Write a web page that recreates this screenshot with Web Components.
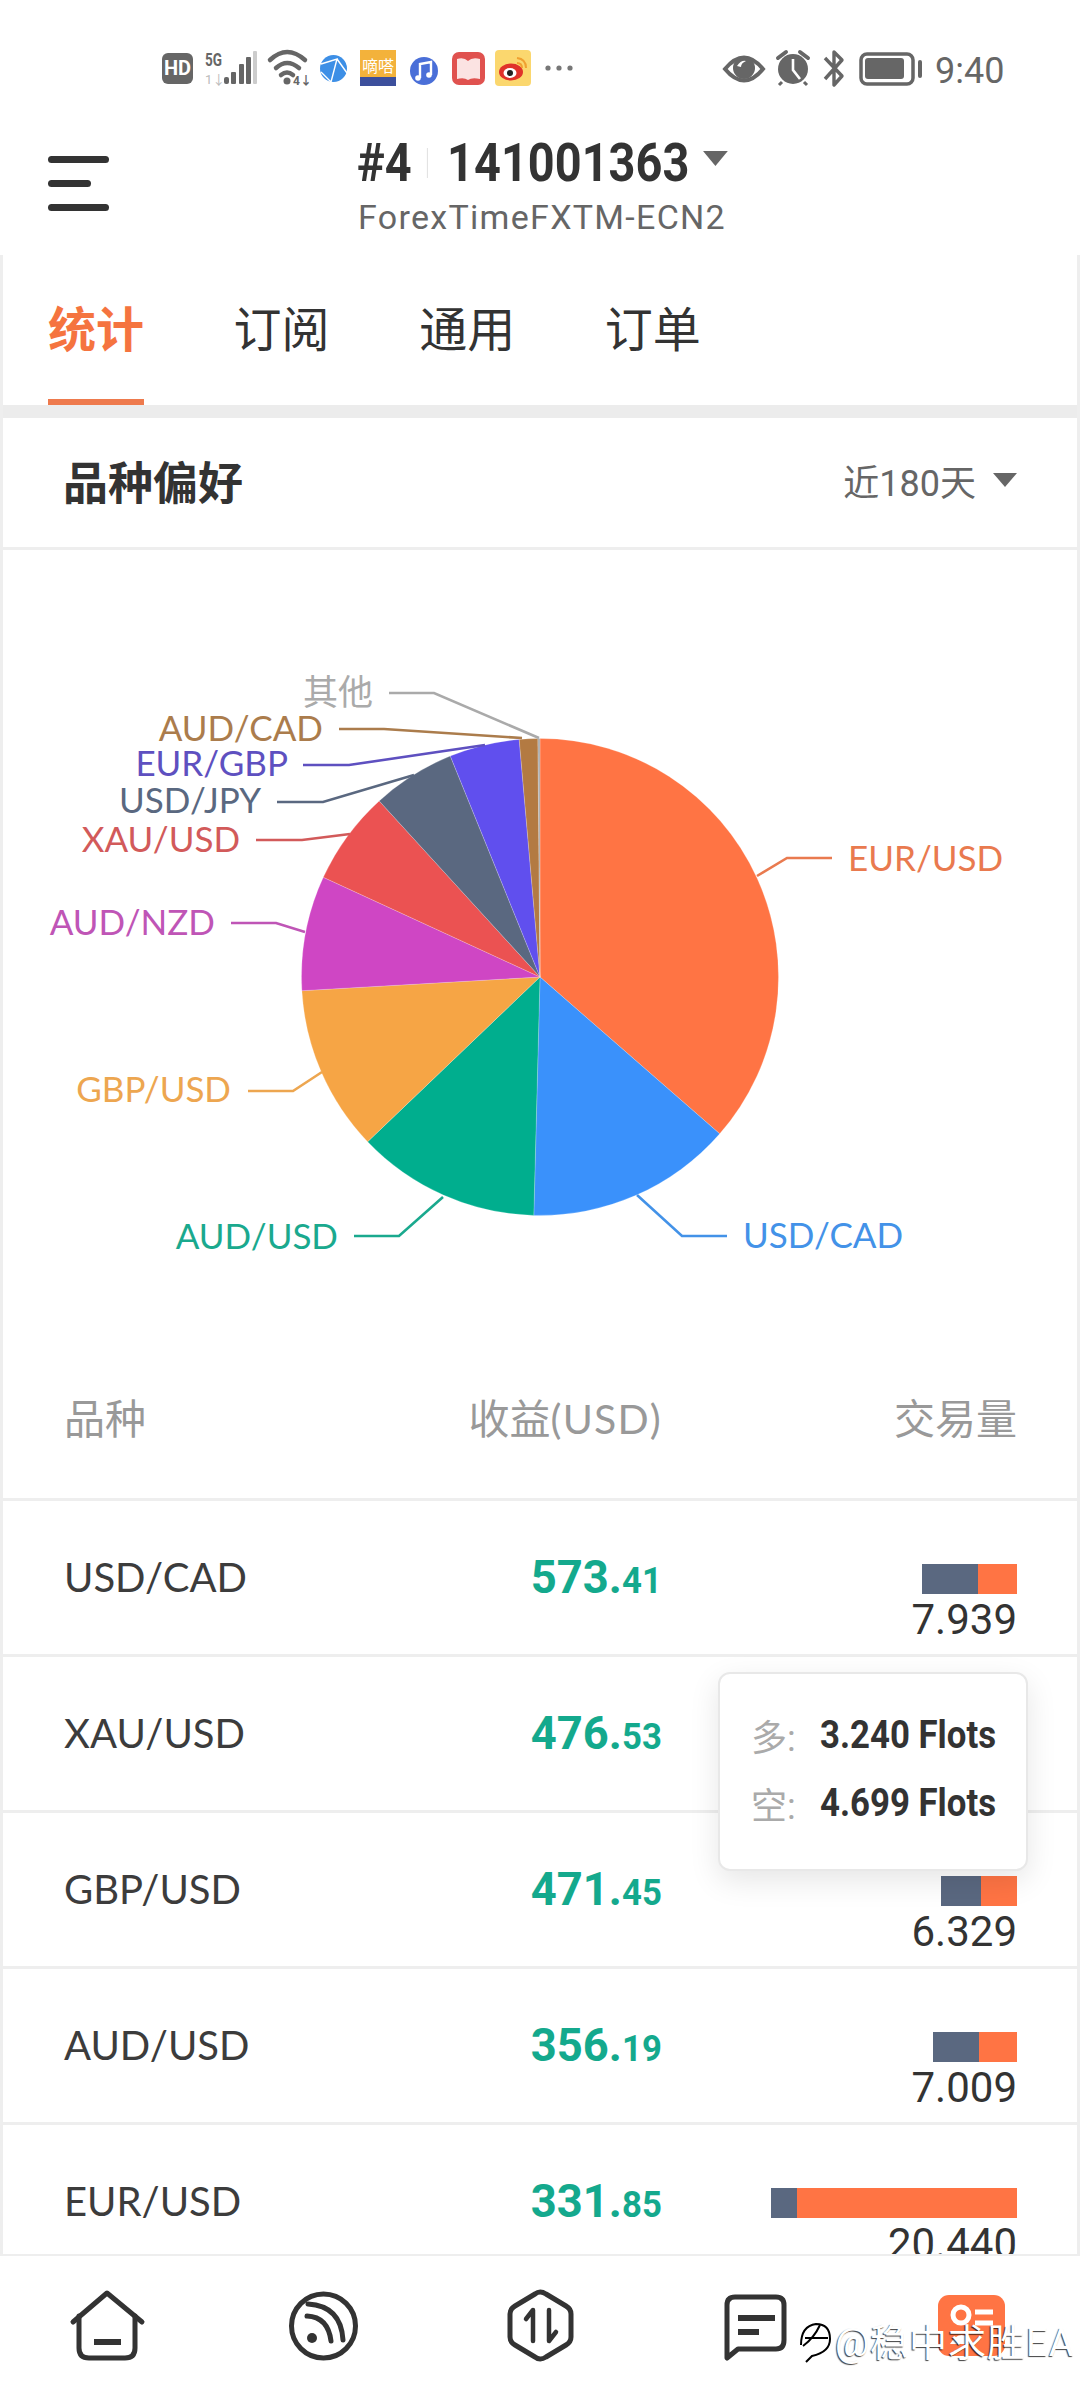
<!DOCTYPE html>
<html lang="zh">
<head>
<meta charset="utf-8">
<title>品种偏好</title>
<style>
  html, body { margin: 0; background: #fff; }
  body { width: 1080px; height: 2400px; overflow: hidden; display: flex; flex-direction: column; font-family: Roboto, "Noto Sans CJK SC", sans-serif; }
  .content { flex: 1; min-height: 0; overflow: hidden; position: relative; border: solid #eeeeee; border-width: 0 3px; }
</style>
</head>
<body>
<status-bar></status-bar>
<app-header></app-header>
<div class="content">
  <tab-bar></tab-bar>
  <section-title></section-title>
  <pie-chart></pie-chart>
  <symbol-head></symbol-head>
  <symbol-row name="USD/CAD" big="573." small="41" start="922" split="978" volume="7.939"></symbol-row>
  <symbol-row name="XAU/USD" big="476." small="53"></symbol-row>
  <symbol-row name="GBP/USD" big="471." small="45" start="941" split="981" volume="6.329"></symbol-row>
  <symbol-row name="AUD/USD" big="356." small="19" start="933" split="979" volume="7.009"></symbol-row>
  <symbol-row name="EUR/USD" big="331." small="85" start="771" split="797" volume="20.440"></symbol-row>
  <vol-tooltip></vol-tooltip>
</div>
<bottom-nav></bottom-nav>
<water-mark></water-mark>

<script>
const CJK = `Roboto, "Noto Sans CJK SC", sans-serif`

class StatusBar extends HTMLElement {
  constructor() {
    super()
    this.attachShadow({ mode: 'open' }).innerHTML = `
      <style>
        :host { display: block; height: 110px; }
        svg { display: block; }
        text { font-family: ${CJK}; }
      </style>
      <svg width="1080" height="110" viewBox="0 0 1080 110">
        <rect x="162" y="53" width="31" height="31" rx="6" fill="#666"/>
        <text x="177.5" y="75" font-size="20" font-weight="700" fill="#fff" text-anchor="middle">HD</text>

        <text x="205" y="66" font-size="19" font-weight="700" fill="#666" textLength="17" lengthAdjust="spacingAndGlyphs">5G</text>
        <text x="205" y="84" font-size="13" fill="#bbb">1↓</text>
        <g fill="#666">
          <rect x="224" y="77" width="5" height="7" rx="2"/>
          <rect x="231" y="72" width="5" height="12" rx="1"/>
          <rect x="239" y="64" width="5" height="20" rx="1"/>
          <rect x="246" y="57" width="5" height="27" rx="1"/>
        </g>
        <rect x="253" y="51" width="4" height="33" rx="1" fill="#ccc"/>

        <g fill="none" stroke="#666" stroke-width="4.5" stroke-linecap="round">
          <path d="M270 60 Q287 44 305 60"/>
          <path d="M276 68 Q287 58 299 68"/>
          <path d="M281 75 Q287 70 293 75"/>
        </g>
        <circle cx="287" cy="81" r="3.5" fill="#666"/>
        <text x="293" y="85" font-size="12" font-weight="700" fill="#666">4↓</text>

        <circle cx="333.5" cy="68.5" r="13.5" fill="#3d8fe6"/>
        <path d="M321 64 L337 59 L331 82 M337 59 L347 73 M321 72 L331 82" fill="none" stroke="#fff" stroke-width="1.4"/>

        <rect x="360" y="50" width="36" height="36" fill="#f3b23b"/>
        <rect x="360" y="77" width="36" height="9" fill="#3c4f9c"/>
        <text x="378" y="72" font-size="16" fill="#fff" text-anchor="middle">嘀嗒</text>

        <circle cx="424" cy="71" r="14" fill="#4a6fd8"/>
        <path d="M420 78 V64 L431 62 V75" fill="none" stroke="#fff" stroke-width="2.4"/>
        <circle cx="418" cy="78" r="2.8" fill="#fff"/>
        <circle cx="429" cy="75" r="2.8" fill="#fff"/>

        <rect x="452" y="52" width="33" height="33" rx="7" fill="#e0524f"/>
        <path d="M457 59 Q464 57 468 61 Q472 57 480 59 V79 Q472 77 468 80 Q464 77 457 79 Z" fill="#fbe3e2"/>

        <rect x="495" y="50" width="36" height="36" rx="4" fill="#fbd76e"/>
        <ellipse cx="511" cy="72" rx="12" ry="8.5" fill="#e0322a"/>
        <ellipse cx="510" cy="73" rx="6.5" ry="5" fill="#fff"/>
        <circle cx="510" cy="73" r="3" fill="#222"/>
        <path d="M517 58 Q526 59 526 68" fill="none" stroke="#f0a030" stroke-width="2"/>
        <path d="M517 63 Q522 63 522 68" fill="none" stroke="#f0a030" stroke-width="2"/>

        <g fill="#777">
          <circle cx="548" cy="68" r="2.6"/><circle cx="559" cy="68" r="2.6"/><circle cx="570" cy="68" r="2.6"/>
        </g>

        <path d="M725 69 Q744 46 763 69 Q744 92 725 69 Z" fill="none" stroke="#666" stroke-width="4"/>
        <circle cx="744" cy="68" r="11" fill="#666"/>
        <path d="M737 66 Q741 60 746 61 Q741 63 741 67 Z" fill="#fff"/>

        <circle cx="793" cy="69" r="15" fill="#666"/>
        <path d="M793 59 V70 L800 79" fill="none" stroke="#fff" stroke-width="2.6"/>
        <path d="M778 58 L786 52 M808 58 L800 52" stroke="#666" stroke-width="4" stroke-linecap="round"/>
        <path d="M782 82 L779 85 M804 82 L807 85" stroke="#666" stroke-width="3"/>

        <path d="M825 58 L842 76 L834 85 V52 L842 60 L825 79" fill="none" stroke="#666" stroke-width="3.4" stroke-linejoin="round"/>

        <rect x="861" y="54" width="52" height="30" rx="6" fill="none" stroke="#666" stroke-width="3.5"/>
        <rect x="865" y="58" width="39" height="21" rx="3" fill="#666"/>
        <rect x="918" y="60" width="4" height="18" rx="2" fill="#666"/>

        <text x="935" y="83" font-size="36" fill="#666">9:40</text>
      </svg>`
  }
}

class AppHeader extends HTMLElement {
  constructor() {
    super()
    this.attachShadow({ mode: 'open' }).innerHTML = `
      <style>
        :host { display: flex; height: 145px; box-sizing: border-box; padding-left: 48px; position: relative; }
        .menu { width: 61px; display: flex; flex-direction: column; gap: 17px; padding-top: 46px; }
        .menu i { display: block; height: 7px; border-radius: 4px; background: #333; }
        .menu i:nth-child(2) { width: 43px; }
        .account { margin-left: 248px; padding-top: 31px; font-family: ${CJK}; }
        .top { display: flex; align-items: center; width: 440px; height: 44px; color: #333; font-size: 53px; font-weight: 700; line-height: 44px; transform: scaleX(.885); transform-origin: left center; }
        .sep { width: 1px; height: 30px; background: #ddd; margin: 0 22px 0 17px; }
        .arrow { margin-left: 16px; margin-bottom: 10px; width: 0; height: 0; border: solid transparent; border-width: 15px 14px 0; border-top-color: #666; }
        .server { margin-top: 15px; margin-left: 1px; color: #666; font-size: 34px; line-height: 34px; letter-spacing: 1.3px; white-space: nowrap; }
      </style>
      <div class="menu"><i></i><i></i><i></i></div>
      <div class="account">
        <div class="top"><span>#4</span><span class="sep"></span><span>141001363</span><span class="arrow"></span></div>
        <div class="server">ForexTimeFXTM-ECN2</div>
      </div>`
  }
}

class TabBar extends HTMLElement {
  constructor() {
    super()
    this.attachShadow({ mode: 'open' }).innerHTML = `
      <style>
        :host { display: flex; height: 163px; box-sizing: border-box; border-bottom: 13px solid #ececec; padding-left: 45px; gap: 89.6px; }
        div { height: 150px; box-sizing: border-box; padding-top: 46px; font-size: 48px; line-height: 60px; color: #333; font-family: ${CJK}; }
        .on { color: #f5743f; font-weight: 700; border-bottom: 6px solid #ee7a4d; }
      </style>
      <div class="on">统计</div><div>订阅</div><div>通用</div><div>订单</div>`
  }
}

class SectionTitle extends HTMLElement {
  constructor() {
    super()
    this.attachShadow({ mode: 'open' }).innerHTML = `
      <style>
        :host { display: flex; align-items: center; height: 132px; box-sizing: border-box; border-bottom: 3px solid #eee; padding: 0 60px 5px 60px; font-family: ${CJK}; }
        h2 { margin: 0; flex: 1; font-size: 45px; font-weight: 700; color: #333; }
        span { font-size: 36px; color: #666; }
        i { margin-left: 17px; width: 0; height: 0; border: solid transparent; border-width: 14px 12px 0; border-top-color: #666; }
      </style>
      <h2>品种偏好</h2><span>近180天</span><i></i>`
  }
}

const SLICES = [
  { name: 'EUR/USD', color: '#ff7444', label: '#e97a4f', to: 131.1, x: 848, y: 858, anchor: 'start', line: '832,858 787,858 757,876' },
  { name: 'USD/CAD', color: '#3a91fb', label: '#4392e8', to: 181.5, x: 743, y: 1235, anchor: 'start', line: '727,1236 682,1236 637,1195' },
  { name: 'AUD/USD', color: '#00ae8e', label: '#1aa98e', to: 226.3, x: 338, y: 1236, anchor: 'end', line: '354,1236 399,1236 443,1197' },
  { name: 'GBP/USD', color: '#f6a545', label: '#eda650', to: 266.7, x: 231, y: 1089, anchor: 'end', line: '248,1091 293,1091 322,1072' },
  { name: 'AUD/NZD', color: '#cf46c4', label: '#bf55b6', to: 294.7, x: 215, y: 922, anchor: 'end', line: '231,923 276,923 305,932' },
  { name: 'XAU/USD', color: '#eb5252', label: '#d25a5a', to: 317.6, x: 240, y: 839, anchor: 'end', line: '256,840 302,840 350,834' },
  { name: 'USD/JPY', color: '#5a6880', label: '#5a6880', to: 337.9, x: 261, y: 800, anchor: 'end', line: '277,802 323,802 414,775' },
  { name: 'EUR/GBP', color: '#604fee', label: '#5e50c0', to: 355, x: 288, y: 763, anchor: 'end', line: '303,765 349,765 485,745' },
  { name: 'AUD/CAD', color: '#b37a42', label: '#ab7c4c', to: 359.5, x: 323, y: 728, anchor: 'end', line: '339,729 384,729 522,738' },
  { name: '其他', color: '#aaaaaa', label: '#aaaaaa', to: 360, x: 373, y: 692, anchor: 'end', line: '389,693 434,693 539,738' }
]

class PieChart extends HTMLElement {
  constructor() {
    super()
    const cx = 540, cy = 977, r = 238.5
    const point = deg => {
      const a = deg * Math.PI / 180
      return `${(cx + r * Math.sin(a)).toFixed(1)} ${(cy - r * Math.cos(a)).toFixed(1)}`
    }
    let from = 0
    let wedges = '', labels = ''
    for (const s of SLICES) {
      const large = s.to - from > 180 ? 1 : 0
      wedges += `<path d="M${cx} ${cy} L${point(from)} A${r} ${r} 0 ${large} 1 ${point(s.to)} Z" fill="${s.color}" stroke="rgba(255,255,255,.5)" stroke-width="0.4"/>`
      labels += `<polyline points="${s.line}" fill="none" stroke="${s.label}" stroke-width="2.6"/>`
      labels += `<text x="${s.x}" y="${s.y + 13}" text-anchor="${s.anchor}" fill="${s.label}">${s.name}</text>`
      from = s.to
    }
    this.attachShadow({ mode: 'open' }).innerHTML = `
      <style>
        :host { display: block; height: 790px; }
        svg { display: block; }
        text { font-family: Lato, "Noto Sans CJK SC", sans-serif; font-size: 35px; }
      </style>
      <svg width="1074" height="790" viewBox="3 550 1074 790">${wedges}${labels}</svg>`
  }
}

class SymbolHead extends HTMLElement {
  constructor() {
    super()
    this.attachShadow({ mode: 'open' }).innerHTML = `
      <style>
        :host { display: grid; grid-template-columns: 295px 303px 355px; height: 161px; box-sizing: border-box; padding: 56px 0 0 61px; border-bottom: 3px solid #eee; color: #999; font-size: 41px; line-height: 46px; font-family: Lato, "Noto Sans CJK SC", sans-serif; }
        .r { text-align: right; }
        .usd { letter-spacing: 1.2px; }
      </style>
      <div>品种</div><div class="r">收益<span class="usd">(USD)</span></div><div class="r">交易量</div>`
  }
}

class SymbolRow extends HTMLElement {
  connectedCallback() {
    const name = this.getAttribute('name')
    const start = +this.getAttribute('start')
    const split = +this.getAttribute('split')
    const volume = this.getAttribute('volume')
    const bar = volume ? `
      <div class="bar" style="width:${1017 - start}px">
        <i style="width:${split - start}px"></i><b></b>
      </div>
      <div class="vol">${volume}</div>` : ''
    this.attachShadow({ mode: 'open' }).innerHTML = `
      <style>
        :host { display: grid; grid-template-columns: 295px 303px 355px; height: 156px; box-sizing: border-box; padding-left: 61px; border-bottom: 3px solid #eee; }
        .name { padding-top: 53px; font-size: 40px; line-height: 46px; color: #3c3c3c; font-family: Lato, sans-serif; }
        .profit { padding-top: 50px; text-align: right; color: #14a98d; font-family: Roboto, sans-serif; font-weight: 700; font-size: 47px; line-height: 52px; }
        .profit span { display: inline-block; transform: scaleX(.965); transform-origin: right center; }
        .profit small { font-size: 36px; }
        .volume { display: flex; flex-direction: column; align-items: flex-end; padding-top: 63px; }
        .bar { display: flex; height: 30px; flex: none; }
        .bar i { background: #5a6880; }
        .bar b { flex: 1; background: #ff7444; }
        .vol { margin-top: 6px; font-family: Roboto, sans-serif; font-size: 42px; line-height: 40px; color: #333; }
      </style>
      <div class="name">${name}</div>
      <div class="profit"><span>${this.getAttribute('big')}<small>${this.getAttribute('small')}</small></span></div>
      <div class="volume">${bar}</div>`
  }
}

class VolTooltip extends HTMLElement {
  constructor() {
    super()
    this.attachShadow({ mode: 'open' }).innerHTML = `
      <style>
        :host { position: absolute; left: 715px; top: 1417px; width: 310px; height: 199px; box-sizing: border-box; padding: 27px 0 0 31px; background: #fff; border: 2px solid #e8e8e8; border-radius: 12px; box-shadow: 0 10px 30px rgba(0,0,0,.1); font-family: Roboto, sans-serif; }
        div { display: flex; align-items: center; height: 68px; }
        span { width: 69px; flex: none; font-size: 36px; color: #aaa; font-family: ${CJK}; }
        b { font-size: 38px; color: #333; white-space: nowrap; transform: scaleX(.915); transform-origin: left center; }
      </style>
      <div><span>多:</span><b>3.240 Flots</b></div>
      <div><span>空:</span><b>4.699 Flots</b></div>`
  }
}

class BottomNav extends HTMLElement {
  constructor() {
    super()
    this.attachShadow({ mode: 'open' }).innerHTML = `
      <style>
        :host { display: block; flex: none; height: 146px; border-top: 2px solid #eee; box-sizing: border-box; }
        svg { display: block; }
      </style>
      <svg width="1080" height="144" viewBox="0 2256 1080 144">
        <g fill="none" stroke="#333" stroke-width="5" stroke-linecap="round" stroke-linejoin="round">
          <path d="M73 2322 L107 2293 L142 2322"/>
          <path d="M79 2316 V2348 Q79 2358 89 2358 H125 Q135 2358 135 2348 V2316"/>
          <path d="M94 2342 H121" stroke-width="6" stroke-linecap="butt"/>

          <circle cx="323.5" cy="2326" r="32"/>
          <path d="M307 2316 Q328 2317 331 2341"/>
          <path d="M308 2304 Q341 2306 343 2340"/>

          <path d="M535 2294 Q540 2290 546 2294 L566 2306 Q571 2309 571 2314 V2337 Q571 2342 566 2345 L546 2357 Q540 2361 535 2357 L515 2345 Q510 2342 510 2337 V2314 Q510 2309 515 2306 Z"/>
          <path d="M533 2341 V2310 L526 2319" stroke-width="4.5"/>
          <path d="M549 2310 V2341 L556 2332" stroke-width="4.5"/>

          <path d="M727 2358 V2305 Q727 2297 735 2297 H776 Q784 2297 784 2305 V2340 Q784 2349 776 2349 H738 Z"/>
          <path d="M738 2318 H775 M738 2332 H759" stroke-width="6" stroke-linecap="butt"/>
        </g>
        <circle cx="312" cy="2338" r="5" fill="#333"/>
        <rect x="938" y="2295" width="67" height="61" rx="11" fill="#ff7444"/>
        <circle cx="961" cy="2315" r="8" fill="none" stroke="#fff" stroke-width="5"/>
        <path d="M950 2344 Q961 2326 974 2344 Z" fill="#fff"/>
        <path d="M975 2312 H993 M975 2323 H993" stroke="#fff" stroke-width="5"/>
      </svg>`
  }
}

class WaterMark extends HTMLElement {
  constructor() {
    super()
    this.attachShadow({ mode: 'open' }).innerHTML = `
      <style>
        :host { position: absolute; left: 798px; top: 2314px; display: flex; align-items: center; gap: 4px; height: 50px; font-family: Roboto, "Noto Sans CJK SC", sans-serif; font-size: 38px; letter-spacing: 1px; color: #fff; text-shadow: -1px 1px 1px rgba(0,0,0,.75); }
        svg { display: block; }
      </style>
      <svg width="33" height="50" viewBox="0 0 33 50">
        <g fill="none" stroke="#000" stroke-width="2">
          <path d="M3 31 Q3 12 18 10 Q32 10 32 25 Q32 38 14 42 L8 48"/>
          <path d="M22 11 Q16 24 5 32"/>
          <path d="M7 24 H30"/>
        </g>
      </svg>
      <span>@稳中求胜EA</span>`
  }
}

customElements.define('status-bar', StatusBar)
customElements.define('app-header', AppHeader)
customElements.define('tab-bar', TabBar)
customElements.define('section-title', SectionTitle)
customElements.define('pie-chart', PieChart)
customElements.define('symbol-head', SymbolHead)
customElements.define('symbol-row', SymbolRow)
customElements.define('vol-tooltip', VolTooltip)
customElements.define('bottom-nav', BottomNav)
customElements.define('water-mark', WaterMark)
</script>
</body>
</html>
